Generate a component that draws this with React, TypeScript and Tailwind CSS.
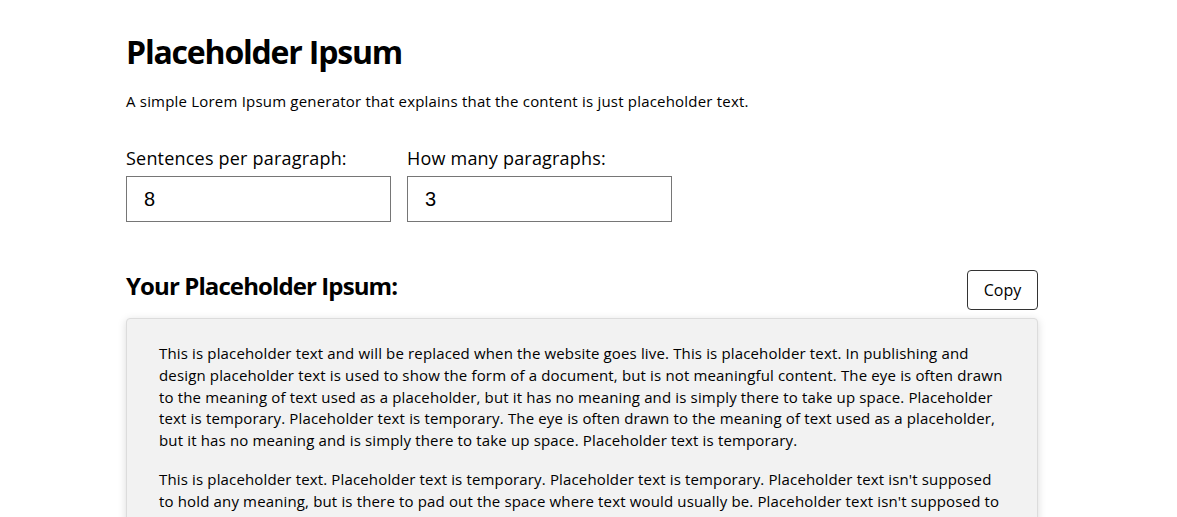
import React from "react";

const p1 =
  "This is placeholder text and will be replaced when the website goes live. This is placeholder text. In publishing and design placeholder text is used to show the form of a document, but is not meaningful content. The eye is often drawn to the meaning of text used as a placeholder, but it has no meaning and is simply there to take up space. Placeholder text is temporary. Placeholder text is temporary. The eye is often drawn to the meaning of text used as a placeholder, but it has no meaning and is simply there to take up space. Placeholder text is temporary.";
const p2 =
  "This is placeholder text. Placeholder text is temporary. Placeholder text is temporary. Placeholder text isn't supposed to hold any meaning, but is there to pad out the space where text would usually be. Placeholder text isn't supposed to hold any meaning, but is there to pad out the space where text would usually be. The eye is often drawn to the meaning of text used as a placeholder, but it has no meaning and is simply there to take up space. Placeholder text is temporary. This is placeholder text.";

export default function App() {
  return (
    <div
      className="min-h-screen bg-white text-black pl-[126px] pt-[30px] tracking-[0.2px]"
      style={{ fontFamily: "'Open Sans', 'Noto Sans', sans-serif" }}
    >
      <div className="w-[912px]">
        <h1 className="text-[32px] font-bold leading-[44px] tracking-[-1.2px]">Placeholder Ipsum</h1>
        <p className="mt-[16px] text-[15px] leading-[22px]">
          A simple Lorem Ipsum generator that explains that the content is just placeholder text.
        </p>
        <div className="mt-[34px] flex gap-4">
          <label className="flex flex-col w-[265px]">
            <span className="text-[18px] leading-[24px]">Sentences per paragraph:</span>
            <input
              defaultValue="8"
              className="mt-[6px] h-[46px] border border-[#767676] px-[17px] text-[20px] tracking-normal outline-none"
              style={{ fontFamily: "'Liberation Sans', Arial, sans-serif" }}
            />
          </label>
          <label className="flex flex-col w-[265px]">
            <span className="text-[18px] leading-[24px]">How many paragraphs:</span>
            <input
              defaultValue="3"
              className="mt-[6px] h-[46px] border border-[#767676] px-[17px] text-[20px] tracking-normal outline-none"
              style={{ fontFamily: "'Liberation Sans', Arial, sans-serif" }}
            />
          </label>
        </div>
        <div className="mt-[48px] flex items-start justify-between">
          <h2 className="text-[24px] font-bold leading-[32px] tracking-[-0.9px]">Your Placeholder Ipsum:</h2>
          <button className="h-[40px] w-[71px] rounded-[4px] border border-[#333] bg-white text-[16px] tracking-normal">
            Copy
          </button>
        </div>
        <div className="mt-[8px] rounded-[4px] border border-[#dcdcdc] bg-[#f2f2f2] px-[32px] pt-[24px] pb-[24px] shadow-[0_2px_8px_rgba(0,0,0,0.15)]">
          <p className="text-[15px] leading-[21.75px] tracking-[0.15px]">{p1}</p>
          <p className="mt-[17px] text-[15px] leading-[21.75px] tracking-[0.15px]">{p2}</p>
        </div>
      </div>
    </div>
  );
}
